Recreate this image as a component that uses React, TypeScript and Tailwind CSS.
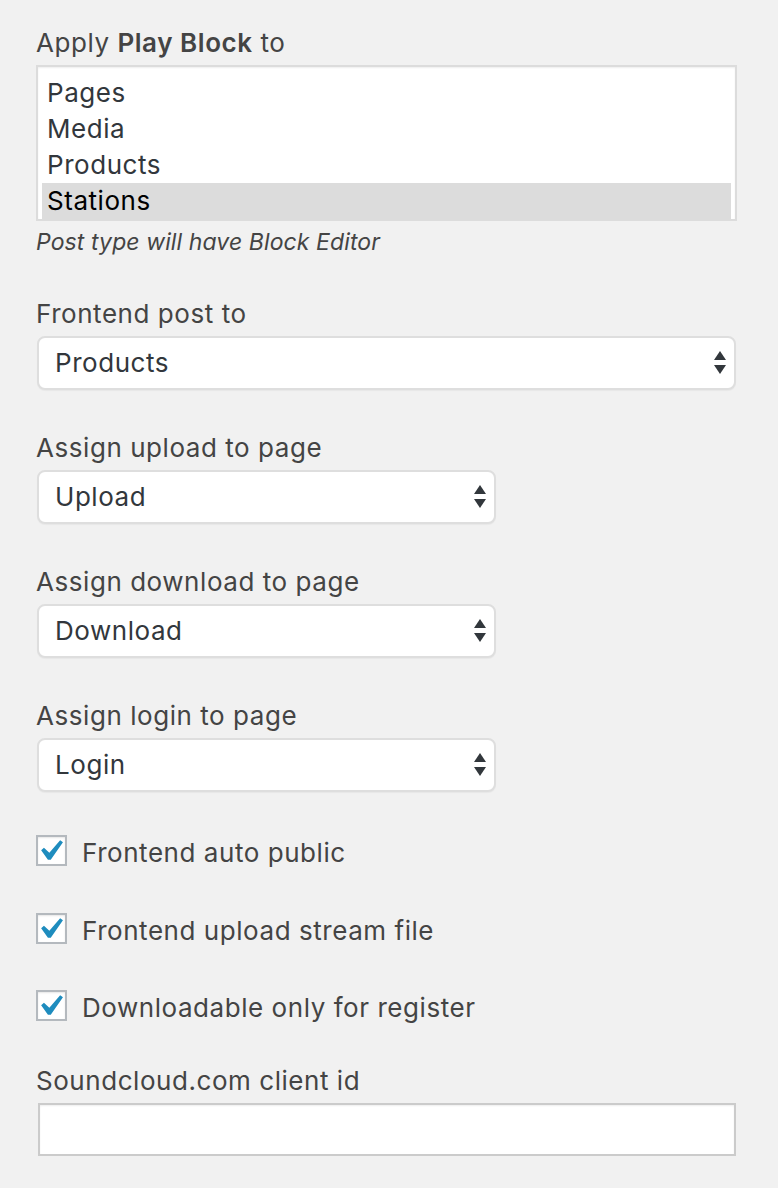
import { type ReactNode } from 'react';

const font = { fontFamily: 'Inter, "Open Sans", sans-serif' };

function Label({ children, className = '' }: { children: ReactNode; className?: string }) {
    return <div className={`text-[26px] leading-[36px] tracking-[0.55px] text-[#444] ${className}`}>{children}</div>;
}

function Arrows() {
    return (
        <svg width="12" height="24" viewBox="0 0 12 24" className="shrink-0">
            <polygon points="6,0 12,9 0,9" fill="#32373c" />
            <polygon points="0,14 12,14 6,23" fill="#32373c" />
        </svg>
    );
}

function Select({ value, wide = false }: { value: string; wide?: boolean }) {
    return (
        <div
            className={`mt-[4px] ml-[1px] flex h-[54px] items-center justify-between rounded-[8px] border-2 border-[#dedede] bg-white pr-[8px] pl-[16px] shadow-[0_1px_1px_rgba(0,0,0,0.04)] ${
                wide ? 'w-[699px]' : 'w-[459px]'
            }`}
        >
            <span className="text-[26px] leading-[36px] tracking-[0.55px] text-[#32373c]">{value}</span>
            <Arrows />
        </div>
    );
}

function Checkbox({ label, className = '' }: { label: string; className?: string }) {
    return (
        <div className={`flex items-start gap-[15px] ${className}`}>
            <div className="relative h-[31px] w-[31px] shrink-0 border-2 border-[#b4b9be] bg-white shadow-[inset_0_1px_2px_rgba(0,0,0,0.1)]">
                <svg width="42" height="42" viewBox="0 0 20 20" className="absolute top-[-7px] left-[-9px]">
                    <path d="M14.83 4.89l1.34.94-5.81 8.38H9.02L5.78 9.67l1.34-1.25 2.57 2.4z" fill="#1e8cbe" />
                </svg>
            </div>
            <span className="text-[26px] leading-[36px] tracking-[0.55px] text-[#444]">{label}</span>
        </div>
    );
}

export default function App() {
    const postTypes = ['Posts', 'Pages', 'Media', 'Products', 'Stations'];

    return (
        <div className="min-h-screen w-[778px] bg-[#f1f1f1] pt-[25px] pl-[36px]" style={font}>
            <Label>
                Apply <span className="font-semibold">Play Block</span> to
            </Label>

            {/* multi select, scrolled a little */}
            <div className="mt-[4px] h-[156px] w-[701px] overflow-hidden border-2 border-[#dcdcdc] bg-white px-[4px] shadow-[inset_0_1px_2px_rgba(0,0,0,0.07)]">
                <div className="mt-[-28px]">
                    {postTypes.map((t) => (
                        <div
                            key={t}
                            className={`h-[36px] pl-[5px] text-[26px] leading-[36px] tracking-[0.55px] ${
                                t === 'Stations' ? 'bg-[#dcdcdc] text-black' : 'text-[#32373c]'
                            }`}
                        >
                            {t}
                        </div>
                    ))}
                </div>
            </div>
            <div className="mt-[6px] text-[23px] leading-[30px] tracking-[0.1px] text-[#444] italic">Post type will have Block Editor</div>

            <Label className="mt-[39px]">Frontend post to</Label>
            <Select value="Products" wide />

            <Label className="mt-[40px]">Assign upload to page</Label>
            <Select value="Upload" />

            <Label className="mt-[40px]">Assign download to page</Label>
            <Select value="Download" />

            <Label className="mt-[40px]">Assign login to page</Label>
            <Select value="Login" />

            <Checkbox label="Frontend auto public" className="mt-[43px]" />
            <Checkbox label="Frontend upload stream file" className="mt-[42px]" />
            <Checkbox label="Downloadable only for register" className="mt-[41px]" />

            <Label className="mt-[37px]">Soundcloud.com client id</Label>
            <div className="mt-[4px] ml-[2px] h-[53px] w-[698px] border-2 border-[#cbcbcb] bg-white shadow-[inset_0_1px_2px_rgba(0,0,0,0.07)]" />
        </div>
    );
}
